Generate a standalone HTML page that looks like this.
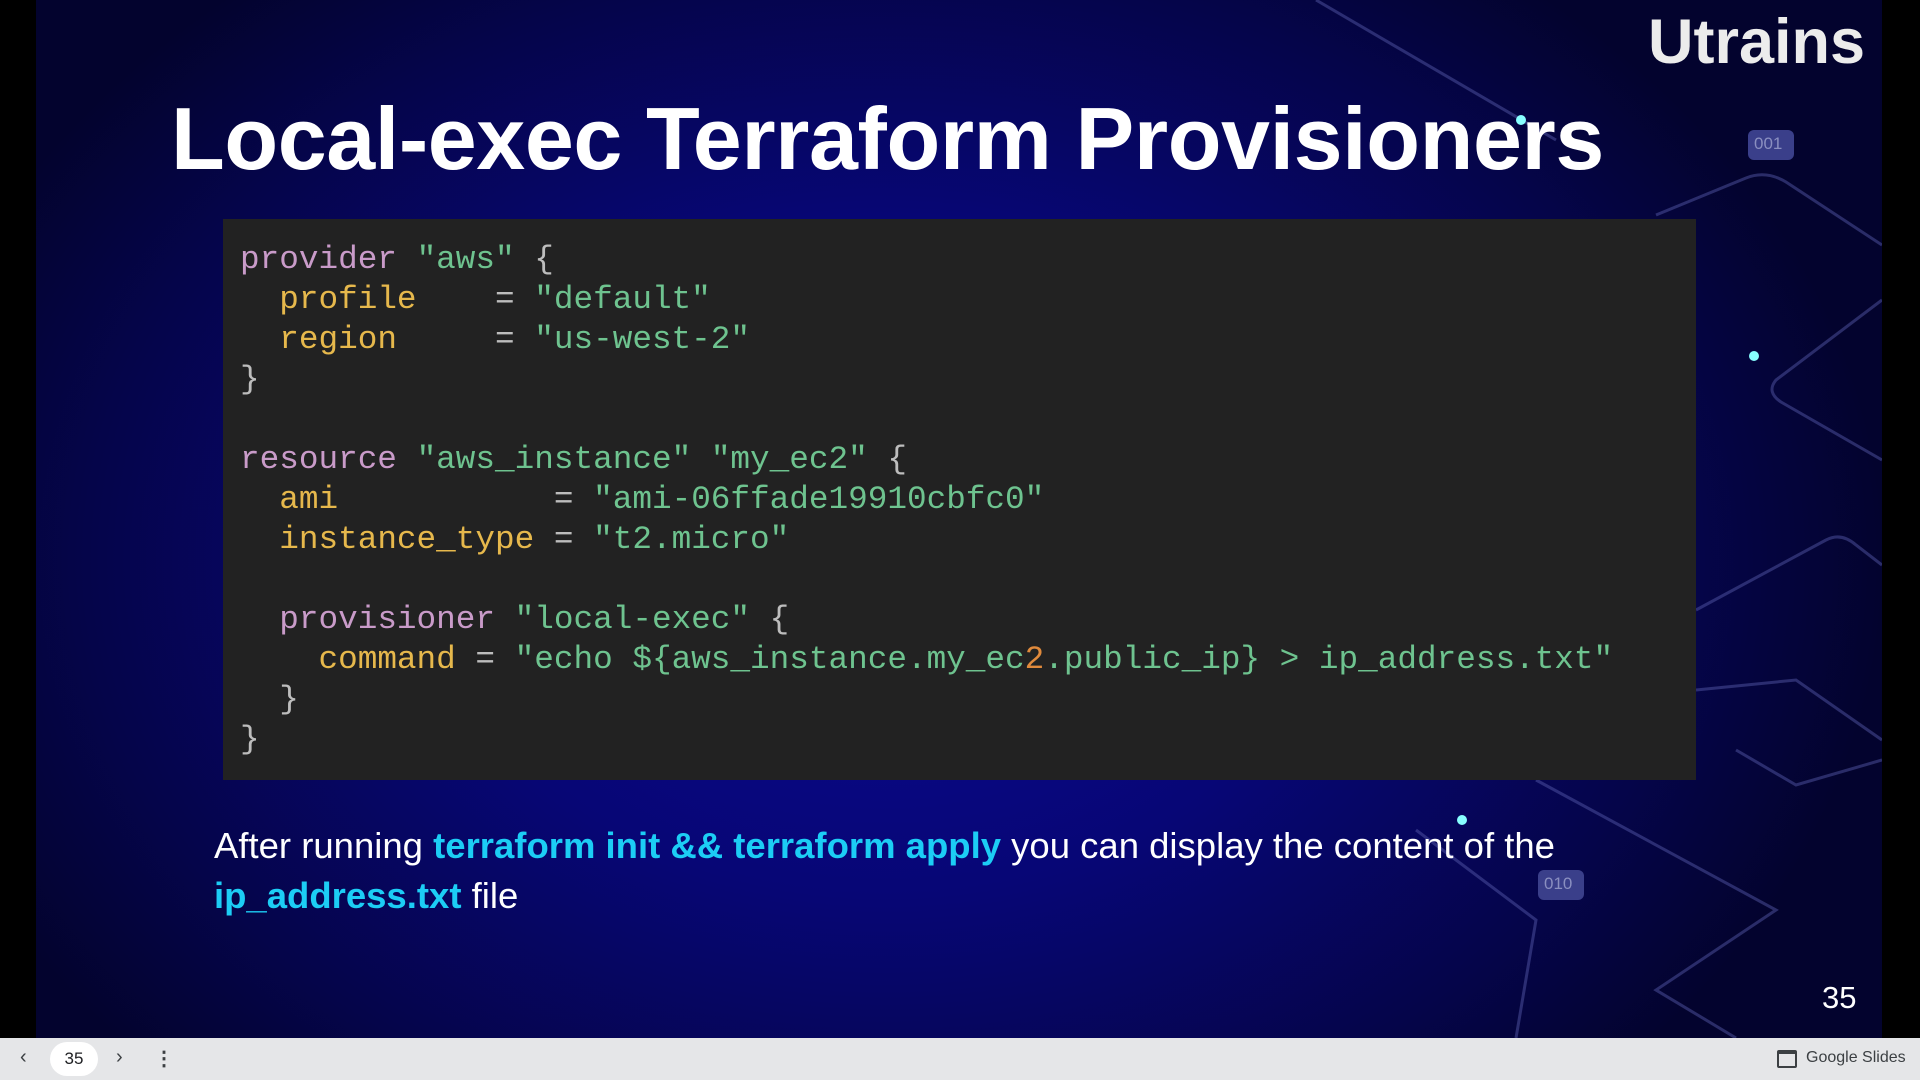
<!DOCTYPE html>
<html><head><meta charset="utf-8"><style>
*{margin:0;padding:0;box-sizing:border-box}
body{width:1920px;height:1080px;overflow:hidden;background:#000;font-family:"Liberation Sans",sans-serif;position:relative}
#slide{position:absolute;left:36px;top:0;width:1846px;height:1038px;overflow:hidden;
background:radial-gradient(ellipse 1000px 750px at 850px 560px,#0b0a92 0%,#070675 45%,#05054a 80%,#03032e 100%)}
#bar{position:absolute;left:0;top:1038px;width:1920px;height:42px;background:#e5e6e8;color:#3c4043;font-size:17px}
h1{position:absolute;left:135px;top:88px;font-size:88px;font-weight:bold;color:#fff;letter-spacing:-0.4px;white-space:nowrap}
#code{position:absolute;left:187px;top:219px;width:1473px;height:561px;background:#222;padding:21px 0 0 17px;
font-family:"Liberation Mono",monospace;font-size:32.7px;line-height:40px;color:#bdbdbd;white-space:pre}
.k{color:#c99bc9}.a{color:#e6b84c}.s{color:#6ec38f}.o{color:#e08a3c}
p{position:absolute;left:178px;top:821px;font-size:36.5px;line-height:50px;color:#fff;width:1420px}
p b{color:#1ccdf5}
.num{position:absolute;left:1786px;top:980px;color:#fff;font-size:31px}
.logo{position:absolute;left:1612px;top:6px;color:#ececec;font-size:63px;font-weight:bold}
</style></head><body>
<div id="slide">
<svg width="1846" height="1038" style="position:absolute;left:0;top:0" fill="none" stroke="#5a5fb0" stroke-opacity=".45" stroke-width="3">
<path d="M1620 215 L1710 178 Q1730 170 1750 182 L1846 245"/>
<path d="M1846 300 L1740 380 Q1730 392 1745 402 L1846 460"/>
<path d="M1660 610 L1790 540 Q1805 532 1820 545 L1846 565"/>
<path d="M1660 690 L1760 680 L1846 740"/>
<path d="M1846 760 L1760 785 L1700 750"/>
<path d="M1500 780 L1740 910 L1620 990 L1700 1038"/>
<path d="M1480 1038 L1500 920 L1380 830"/>
<path d="M1280 0 L1520 140"/>
<rect x="1712" y="130" width="46" height="30" rx="6" fill="#3a3f8a" stroke="none"/>
<rect x="1502" y="870" width="46" height="30" rx="6" fill="#3a3f8a" stroke="none"/>
<circle cx="1718" cy="356" r="5" fill="#8ff" stroke="none"/>
<circle cx="1426" cy="820" r="5" fill="#8ff" stroke="none"/>
<circle cx="1485" cy="120" r="5" fill="#8ff" stroke="none"/>
</svg>
<div style="position:absolute;left:1718px;top:134px;color:#8a8fc0;font-size:17px">001</div>
<div style="position:absolute;left:1508px;top:874px;color:#8a8fc0;font-size:17px">010</div>
<div class="logo">Utrains</div>
<h1>Local-exec Terraform Provisioners</h1>
<div id="code"><span class="k">provider</span> <span class="s">"aws"</span> {
  <span class="a">profile</span>    = <span class="s">"default"</span>
  <span class="a">region</span>     = <span class="s">"us-west-2"</span>
}

<span class="k">resource</span> <span class="s">"aws_instance"</span> <span class="s">"my_ec2"</span> {
  <span class="a">ami</span>           = <span class="s">"ami-06ffade19910cbfc0"</span>
  <span class="a">instance_type</span> = <span class="s">"t2.micro"</span>

  <span class="k">provisioner</span> <span class="s">"local-exec"</span> {
    <span class="a">command</span> = <span class="s">"echo ${aws_instance.my_ec<span class="o">2</span>.public_ip} &gt; ip_address.txt"</span>
  }
}</div>
<p>After running <b>terraform init &amp;&amp; terraform apply</b> you can display the content of the <b>ip_address.txt</b> file</p>
<div class="num">35</div>
</div>
<div id="bar">
<span style="position:absolute;left:20px;top:8px;font-size:20px">&#8249;</span>
<span style="position:absolute;left:50px;top:4px;width:48px;height:34px;border-radius:17px;background:#fff;text-align:center;line-height:34px;font-size:17px;color:#202124">35</span>
<span style="position:absolute;left:116px;top:8px;font-size:20px">&#8250;</span>
<span style="position:absolute;left:154px;top:8px;font-size:20px;font-weight:bold">&#8942;</span>
<span style="position:absolute;left:1777px;top:12px;width:20px;height:18px;border:2px solid #3c4043;border-top-width:4px;border-radius:2px"></span>
<span style="position:absolute;left:1806px;top:11px;font-size:16px">Google Slides</span>
</div>
</body></html>
